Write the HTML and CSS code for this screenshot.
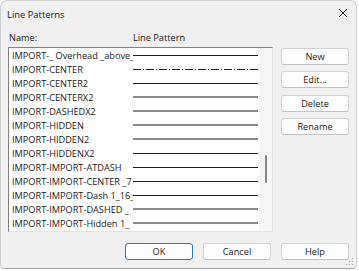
FILE: index.html
```html
<!DOCTYPE html>
<html lang="en">

<head>
    <meta charset="UTF-8">
    <title>Line Patterns</title>
    <link rel="stylesheet" href="styles.css">
</head>

<body>
    <div class="dialog">
        <div class="title-bar">
            <span class="title">Line Patterns</span>
            <svg class="close-icon" width="10" height="10" viewBox="0 0 10 10">
                <path d="M1 1 L9 9 M9 1 L1 9" stroke="#1a1a1a" stroke-width="1" fill="none" />
            </svg>
        </div>

        <div class="content">
            <div class="list-column">
                <div class="labels">
                    <span class="label-name">Name:</span>
                    <span class="label-pattern">Line Pattern</span>
                </div>
                <div class="list-box">
                    <div class="rows">
                        <div class="row"><span class="name">IMPORT-_ Overhead _above_</span><span class="line solid"></span></div>
                        <div class="row"><span class="name">IMPORT-CENTER</span><span class="line dashdot"></span></div>
                        <div class="row"><span class="name">IMPORT-CENTER2</span><span class="line solid"></span></div>
                        <div class="row"><span class="name">IMPORT-CENTERX2</span><span class="line soft"></span></div>
                        <div class="row"><span class="name">IMPORT-DASHEDX2</span><span class="line soft"></span></div>
                        <div class="row"><span class="name">IMPORT-HIDDEN</span><span class="line soft"></span></div>
                        <div class="row"><span class="name">IMPORT-HIDDEN2</span><span class="line soft"></span></div>
                        <div class="row"><span class="name">IMPORT-HIDDENX2</span><span class="line solid"></span></div>
                        <div class="row"><span class="name">IMPORT-IMPORT-ATDASH</span><span class="line solid"></span></div>
                        <div class="row"><span class="name">IMPORT-IMPORT-CENTER _7</span><span class="line solid"></span></div>
                        <div class="row"><span class="name">IMPORT-IMPORT-Dash 1_16_</span><span class="line solid"></span></div>
                        <div class="row"><span class="name">IMPORT-IMPORT-DASHED _</span><span class="line soft"></span></div>
                        <div class="row"><span class="name">IMPORT-IMPORT-Hidden 1_</span><span class="line soft"></span></div>
                    </div>
                    <div class="scrollbar">
                        <div class="thumb"></div>
                    </div>
                </div>
            </div>

            <div class="side-buttons">
                <button class="btn">New</button>
                <button class="btn">Edit...</button>
                <button class="btn">Delete</button>
                <button class="btn">Rename</button>
            </div>
        </div>

        <div class="footer">
            <button class="btn btn-default">OK</button>
            <button class="btn">Cancel</button>
            <button class="btn">Help</button>
        </div>

        <svg class="grip" width="8" height="8" viewBox="0 0 8 8">
            <rect x="6" y="0" width="1" height="1" fill="#9a9a9a" />
            <rect x="3" y="3" width="1" height="1" fill="#9a9a9a" />
            <rect x="6" y="3" width="1" height="1" fill="#9a9a9a" />
            <rect x="0" y="6" width="1" height="1" fill="#9a9a9a" />
            <rect x="3" y="6" width="1" height="1" fill="#9a9a9a" />
            <rect x="6" y="6" width="1" height="1" fill="#9a9a9a" />
        </svg>
    </div>
</body>

</html>
```

FILE: styles.css
```css
body {
    margin: 0;
    padding: 0;
    background-color: #ffffff;
    font-family: 'Open Sans', 'Noto Sans', sans-serif;
    font-size: 9.2px;
    color: #1a1a1a;
}

.dialog {
    position: relative;
    width: 355px;
    height: 267px;
    background-color: #f0f0f0;
    border: 1px solid #cfcfcf;
    border-bottom-color: #a8a8a8;
    border-radius: 7px 7px 4px 4px;
    display: flex;
    flex-direction: column;
}

.title-bar {
    height: 26px;
    display: flex;
    align-items: center;
    justify-content: space-between;
    padding: 0 7px 0 6px;
}

.title {
    font-size: 9.4px;
}

.close-icon {
    margin-top: -2px;
    margin-right: 1px;
}

.content {
    display: flex;
    padding-left: 7px;
}

.list-column {
    display: flex;
    flex-direction: column;
}

.labels {
    display: flex;
    height: 20px;
    align-items: center;
    padding-left: 1px;
}

.label-name {
    width: 124px;
}

.list-box {
    width: 263px;
    height: 183px;
    background-color: #ffffff;
    border: 1px solid #e3e3e3;
    border-top-color: #828282;
    border-left-color: #828282;
    display: flex;
}

.rows {
    width: 250px;
    overflow: hidden;
}

.row {
    height: 14px;
    display: flex;
    align-items: center;
    padding-left: 3px;
}

.name {
    width: 121px;
    flex-shrink: 0;
    white-space: nowrap;
    overflow: hidden;
}

.line {
    width: 125px;
    height: 1px;
    background-color: #1f1f1f;
}

.line.soft {
    height: 2px;
    background-color: #8a8a8a;
}

.line.dashdot {
    background: repeating-linear-gradient(90deg, #1f1f1f 0 8px, transparent 8px 10px, #1f1f1f 10px 11px, transparent 11px 13px);
}

.scrollbar {
    flex: 1;
    background-color: #f6f6f6;
    position: relative;
}

.thumb {
    position: absolute;
    left: 6px;
    top: 107px;
    width: 2px;
    height: 28px;
    border-radius: 1px;
    background-color: #858585;
}

.side-buttons {
    display: flex;
    flex-direction: column;
    gap: 6.4px;
    margin-left: 8px;
    padding-top: 21px;
}

.btn {
    width: 68px;
    height: 17px;
    padding: 0;
    font-family: inherit;
    font-size: 9.2px;
    color: #1a1a1a;
    background-color: #fdfdfd;
    border: 1px solid #d3d3d3;
    border-bottom-color: #c2c2c2;
    border-radius: 3px;
}

.btn-default {
    border-color: #2a78c8;
}

.footer {
    display: flex;
    justify-content: flex-end;
    gap: 10px;
    padding: 11px 7px 0 0;
}

.grip {
    position: absolute;
    right: 2px;
    bottom: 2px;
}
```
